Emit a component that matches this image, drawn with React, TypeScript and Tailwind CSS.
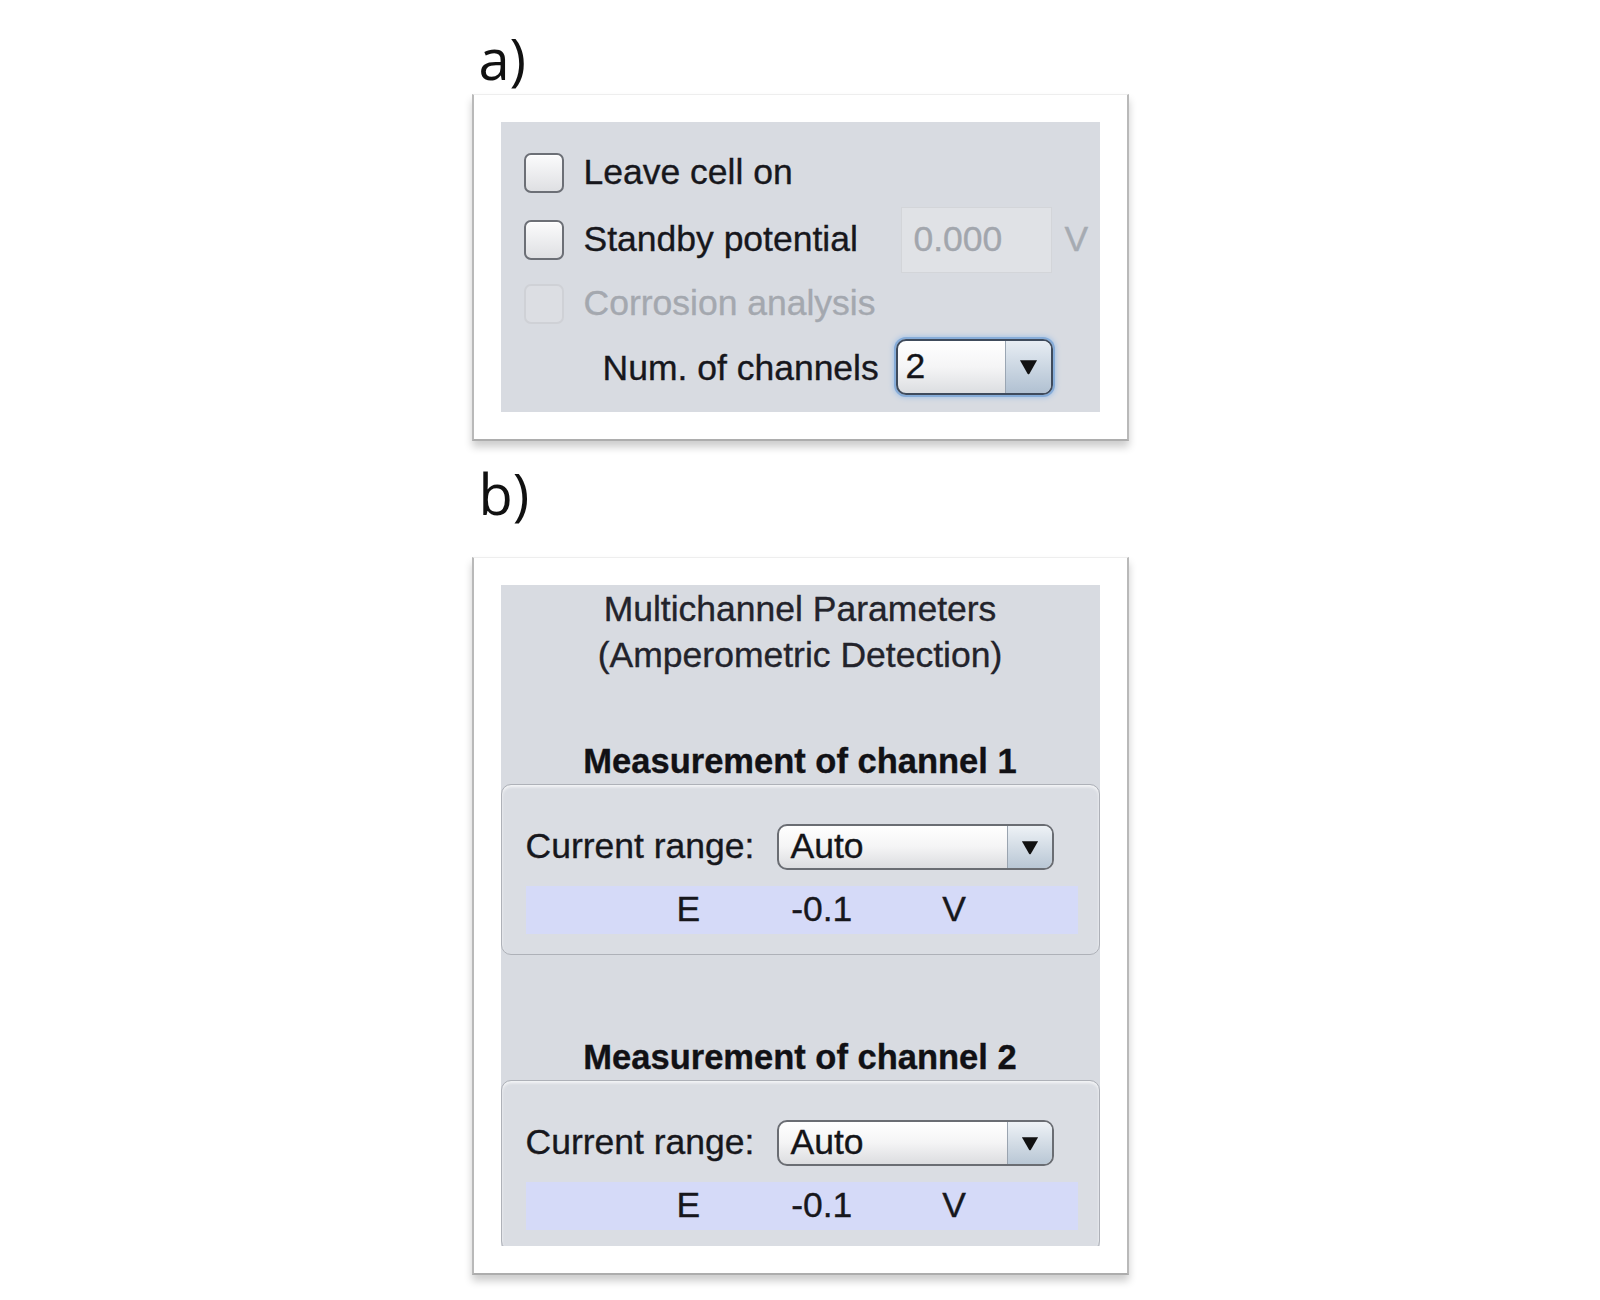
import React from "react";

const FONT = { fontFamily: '"Liberation Sans", Arial, sans-serif' };
const LABEL_FONT = { fontFamily: '"Open Sans", "Noto Sans", sans-serif' };

function Triangle({ w, h }: { w: number; h: number }) {
  return (
    <svg width={w} height={h} viewBox="0 0 20 16">
      <path d="M1 1 H19 L11 15 Q10 16.2 9 15 Z" fill="#111" />
    </svg>
  );
}

function Checkbox({ disabled }: { disabled?: boolean }) {
  return (
    <div
      className={
        disabled
          ? "h-[40px] w-[40px] shrink-0 rounded-[7px] border-2 border-[#cfd1d6] bg-[#dcdee3]"
          : "h-[40px] w-[40px] shrink-0 rounded-[7px] border-2 border-[#6c6f76] bg-gradient-to-b from-[#fbfbfc] to-[#dfe0e3] shadow-[inset_0_1px_0_#ffffff]"
      }
    />
  );
}

function AutoSelect() {
  return (
    <div className="flex h-[46px] w-[277px] overflow-hidden rounded-[10px] border-2 border-[#6a6d73] bg-gradient-to-b from-white via-[#f4f4f5] to-[#dcdde0]">
      <div className="flex flex-1 items-center pl-[12px] text-[35.5px] leading-none text-[#141418]">Auto</div>
      <div className="flex w-[45px] items-center justify-center border-l border-[#9aa4b0] bg-gradient-to-b from-[#eef2f6] to-[#b9c7d5]">
        <Triangle w={18} h={15} />
      </div>
    </div>
  );
}

function ChannelBox() {
  return (
    <div className="h-[171px] shrink-0 rounded-[10px] border border-[#aeb1b8] bg-[#dadde3] pl-[24px] pr-[21px] pt-[39px] shadow-[inset_0_2px_3px_rgba(255,255,255,0.7)]">
      <div className="flex h-[46px] items-center">
        <div className="w-[251px] text-[35.5px] leading-none text-[#17171c]">Current range:</div>
        <AutoSelect />
      </div>
      <div className="mt-[16px] flex h-[48px] items-center bg-[#d5daf8] text-[35.5px] leading-none text-[#17171c]">
        <span className="ml-[151px]">E</span>
        <span className="ml-[91px]">-0.1</span>
        <span className="ml-[90px]">V</span>
      </div>
    </div>
  );
}

function Card({ children }: { children: React.ReactNode }) {
  return (
    <div className="w-[657px] border-x-2 border-b-2 border-t border-x-[#b9b9b9] border-b-[#adadad] border-t-[#eeeeee] bg-white p-[27px] shadow-[0_6px_8px_rgba(0,0,0,0.2)]">
      {children}
    </div>
  );
}

export default function App() {
  return (
    <div className="min-h-[1300px] w-full bg-white [-webkit-text-stroke:0.35px_currentColor]" style={FONT}>
      <div className="mx-auto flex w-[657px] flex-col pt-[30px]">
        <div className="h-[56px] pl-[7px] text-[56px] leading-[56px] text-[#111] [-webkit-text-stroke:0px]" style={LABEL_FONT}>
          a)
        </div>
        <div className="mt-[8px]">
          <Card>
            <div className="h-[290px] bg-[#d8dbe1] pl-[23px] pt-[17px]">
              <div className="flex h-[67px] items-center">
                <Checkbox />
                <span className="ml-[20px] text-[35.5px] leading-none text-[#17171c]">Leave cell on</span>
              </div>
              <div className="flex h-[67px] items-center">
                <Checkbox />
                <span className="ml-[20px] w-[317px] text-[35.5px] leading-none text-[#17171c]">Standby potential</span>
                <div className="flex h-[66px] w-[151px] items-center border border-[#d3d5d9] bg-[#e0e2e6] pl-[12px] text-[35.5px] leading-none text-[#a2a6ad]">
                  0.000
                </div>
                <span className="ml-[13px] text-[35.5px] leading-none text-[#a6abb2]">V</span>
              </div>
              <div className="flex h-[62px] items-center">
                <Checkbox disabled />
                <span className="ml-[20px] text-[35.5px] leading-none text-[#a4a8af]">Corrosion analysis</span>
              </div>
              <div className="flex h-[67px] items-center pl-[79px]">
                <span className="w-[293px] text-[35.5px] leading-none text-[#17171c]">Num. of channels</span>
                <div className="-mt-[4px] flex h-[56px] w-[157px] overflow-hidden rounded-[10px] border-2 border-[#3f4b5c] bg-gradient-to-b from-white via-[#f5f5f6] to-[#dcdee1] shadow-[0_0_0_2px_#86acd8,0_0_5px_3px_#a9c5e6]">
                  <div className="flex flex-1 items-center pl-[8px] text-[35.5px] leading-none text-[#141418]">2</div>
                  <div className="flex w-[46px] items-center justify-center border-l border-[#9aa6b3] bg-gradient-to-b from-[#e7edf3] to-[#b1c1d2]">
                    <Triangle w={19} h={16} />
                  </div>
                </div>
              </div>
            </div>
          </Card>
        </div>

        <div className="mt-[24px] h-[56px] pl-[7px] text-[56px] leading-[56px] text-[#111] [-webkit-text-stroke:0px]" style={LABEL_FONT}>
          b)
        </div>
        <div className="mt-[36px]">
          <Card>
            <div className="flex h-[661px] flex-col overflow-hidden bg-[#d8dbe1]">
              <div className="pt-[1px] text-center text-[35.5px] leading-[46px] text-[#23232b]">
                <div>Multichannel Parameters</div>
                <div>(Amperometric Detection)</div>
              </div>
              <div className="mt-[60px] h-[46px] shrink-0 text-center text-[34.5px] font-bold leading-[46px] text-[#111115]">
                Measurement of channel 1
              </div>
              <ChannelBox />
              <div className="mt-[79px] h-[46px] shrink-0 text-center text-[34.5px] font-bold leading-[46px] text-[#111115]">
                Measurement of channel 2
              </div>
              <ChannelBox />
            </div>
          </Card>
        </div>
      </div>
    </div>
  );
}
